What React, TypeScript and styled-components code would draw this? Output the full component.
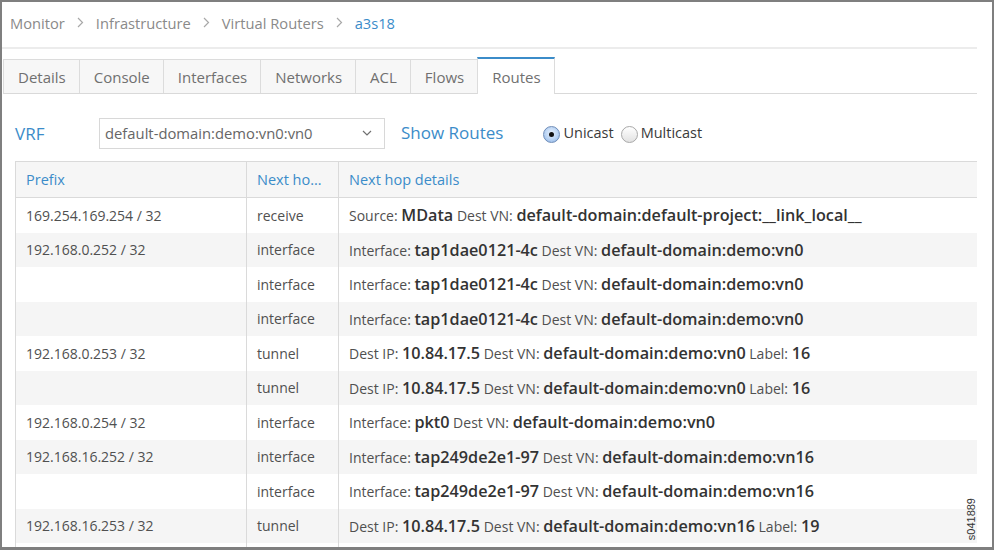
import styled, { createGlobalStyle } from 'styled-components'

const GlobalStyle = createGlobalStyle`
  html, body {
    margin: 0;
    padding: 0;
    background: #ffffff;
  }
  body {
    font-family: "Open Sans", "Noto Sans", sans-serif;
  }
`

const BLUE = '#3b8cc9'

const Frame = styled.div`
  width: 994px;
  height: 550px;
  box-sizing: border-box;
  border: 2px solid #7f7f7f;
  border-bottom-width: 3px;
  background: #fff;
  overflow: hidden;
  position: relative;
  padding-right: 15px;
`

const Crumbs = styled.div`
  height: 47px;
  box-sizing: border-box;
  padding: 0 0 4px 8px;
  display: flex;
  align-items: center;
  gap: 12px;
  border-bottom: 2px solid #ececec;
  font-size: 14.7px;
  color: #8a8a8a;
`

const Crumb = styled.span<{ $active?: boolean }>`
  color: ${p => (p.$active ? BLUE : '#8a8a8a')};
`

const TabBar = styled.div`
  margin-top: 8px;
  margin-left: 1px;
  display: flex;
  align-items: flex-end;
  border-bottom: 1px solid #d9d9d9;
  height: 36px;
`

const Tab = styled.div<{ $active?: boolean }>`
  box-sizing: border-box;
  padding: 0 13px 0 14px;
  display: flex;
  align-items: center;
  font-size: 15px;
  color: #707070;
  border: 1px solid #dcdcdc;
  border-bottom: none;
  border-right: none;
  background: ${p => (p.$active ? '#ffffff' : '#f7f7f7')};
  border-top: ${p => (p.$active ? `2px solid ${BLUE}` : '1px solid #dcdcdc')};
  margin-bottom: ${p => (p.$active ? '-1px' : '0')};
  height: ${p => (p.$active ? '37px' : '34px')};
  &:last-child {
    border-right: 1px solid #dcdcdc;
  }
`

const Content = styled.div`
  padding: 23px 0 0 13px;
`

const Toolbar = styled.div`
  display: flex;
  align-items: center;
  height: 32px;
`

const VrfLabel = styled.span`
  width: 84px;
  font-size: 17px;
  color: ${BLUE};
`

const Select = styled.div`
  width: 286px;
  height: 31px;
  box-sizing: border-box;
  border: 1px solid #d8d8d8;
  display: flex;
  align-items: center;
  justify-content: space-between;
  padding: 0 12px 0 5px;
  font-size: 14.8px;
  color: #666;
`

const ShowRoutes = styled.span`
  margin-left: 16px;
  font-size: 17px;
  color: ${BLUE};
  margin-top: -1px;
`

const RadioGroup = styled.div`
  margin-left: 40px;
  display: flex;
  align-items: center;
  gap: 3px;
  font-size: 14.5px;
  color: #3a3a3a;
  margin-top: -1px;
`

const RadioDot = styled.span<{ $on?: boolean }>`
  width: 17px;
  height: 17px;
  box-sizing: border-box;
  border-radius: 50%;
  border: 1px solid ${p => (p.$on ? '#6f8db8' : '#a8a8a8')};
  background: ${p =>
    p.$on
      ? 'radial-gradient(circle at 50% 40%, #e8f1fd 0%, #b9d3f3 55%, #86aee4 100%)'
      : 'linear-gradient(#ffffff, #e2e2e2)'};
  display: inline-flex;
  align-items: center;
  justify-content: center;
  margin-top: 4px;
  &::after {
    content: '';
    display: ${p => (p.$on ? 'block' : 'none')};
    width: 5px;
    height: 5px;
    border-radius: 50%;
    background: #111;
  }
`

const RadioLabel = styled.span`
  margin-right: 4px;
`

const Table = styled.table`
  margin-top: 12px;
  width: 962px;
  table-layout: fixed;
  border-collapse: collapse;
  border-top: 1px solid #dadada;
  border-left: 1px solid #dadada;
`

const Th = styled.th`
  height: 35px;
  padding: 0 10px;
  text-align: left;
  font-weight: 400;
  font-size: 14.5px;
  color: ${BLUE};
  background: #f6f6f6;
  border-right: 1px solid #dadada;
  border-bottom: 1px solid #dadada;
  white-space: nowrap;
  overflow: hidden;
  &:last-child {
    border-right: none;
  }
`

const Tr = styled.tr<{ $alt: boolean }>`
  background: ${p => (p.$alt ? '#f5f5f5' : '#ffffff')};
`

const Td = styled.td`
  height: 34.5px;
  padding: 0 10px;
  font-size: 14px;
  color: #505050;
  border-right: 1px solid #dadada;
  white-space: nowrap;
  overflow: hidden;
  &:last-child {
    border-right: none;
  }
`

const Val = styled.b`
  font-weight: 600;
  font-size: 16.2px;
  color: #333;
`

const Watermark = styled.div`
  position: absolute;
  right: 16px;
  bottom: 7px;
  font-family: "Liberation Sans", Arial, sans-serif;
  font-size: 11px;
  line-height: 10px;
  color: #333;
  writing-mode: vertical-rl;
  transform: rotate(180deg);
  white-space: nowrap;
`

const Sep = () => (
  <svg width="7" height="11" viewBox="0 0 7 11">
    <path d="M1 1l4.5 4.5L1 10" fill="none" stroke="#a8a8a8" strokeWidth="1.2" />
  </svg>
)

const Chevron = () => (
  <svg width="10" height="6" viewBox="0 0 10 6">
    <path d="M1 1l4 4 4-4" fill="none" stroke="#707070" strokeWidth="1.2" />
  </svg>
)

type Part = [string, string]
interface Route {
  prefix: string
  hop: string
  details: Part[]
}

const iface = (tap: string, vn: string): Part[] => [
  ['Interface: ', tap],
  [' Dest VN: ', vn],
]
const tunnel = (vn: string, label: string): Part[] => [
  ['Dest IP: ', '10.84.17.5'],
  [' Dest VN: ', vn],
  [' Label: ', label],
]

const routes: Route[] = [
  {
    prefix: '169.254.169.254 / 32',
    hop: 'receive',
    details: [
      ['Source: ', 'MData'],
      [' Dest VN: ', 'default-domain:default-project:__link_local__'],
    ],
  },
  { prefix: '192.168.0.252 / 32', hop: 'interface', details: iface('tap1dae0121-4c', 'default-domain:demo:vn0') },
  { prefix: '', hop: 'interface', details: iface('tap1dae0121-4c', 'default-domain:demo:vn0') },
  { prefix: '', hop: 'interface', details: iface('tap1dae0121-4c', 'default-domain:demo:vn0') },
  { prefix: '192.168.0.253 / 32', hop: 'tunnel', details: tunnel('default-domain:demo:vn0', '16') },
  { prefix: '', hop: 'tunnel', details: tunnel('default-domain:demo:vn0', '16') },
  { prefix: '192.168.0.254 / 32', hop: 'interface', details: iface('pkt0', 'default-domain:demo:vn0') },
  { prefix: '192.168.16.252 / 32', hop: 'interface', details: iface('tap249de2e1-97', 'default-domain:demo:vn16') },
  { prefix: '', hop: 'interface', details: iface('tap249de2e1-97', 'default-domain:demo:vn16') },
  { prefix: '192.168.16.253 / 32', hop: 'tunnel', details: tunnel('default-domain:demo:vn16', '19') },
  { prefix: '', hop: '', details: [] },
]

const tabs = ['Details', 'Console', 'Interfaces', 'Networks', 'ACL', 'Flows', 'Routes']

export default function App() {
  return (
    <>
      <GlobalStyle />
      <Frame>
        <Crumbs>
          <Crumb>Monitor</Crumb>
          <Sep />
          <Crumb>Infrastructure</Crumb>
          <Sep />
          <Crumb>Virtual Routers</Crumb>
          <Sep />
          <Crumb $active>a3s18</Crumb>
        </Crumbs>

        <TabBar>
          {tabs.map(t => (
            <Tab key={t} $active={t === 'Routes'}>
              {t}
            </Tab>
          ))}
        </TabBar>

        <Content>
          <Toolbar>
            <VrfLabel>VRF</VrfLabel>
            <Select>
              <span>default-domain:demo:vn0:vn0</span>
              <Chevron />
            </Select>
            <ShowRoutes>Show Routes</ShowRoutes>
            <RadioGroup>
              <RadioDot $on />
              <RadioLabel>Unicast</RadioLabel>
              <RadioDot />
              <RadioLabel>Multicast</RadioLabel>
            </RadioGroup>
          </Toolbar>

          <Table>
            <colgroup>
              <col style={{ width: 231 }} />
              <col style={{ width: 92 }} />
              <col />
            </colgroup>
            <thead>
              <tr>
                <Th>Prefix</Th>
                <Th>Next ho…</Th>
                <Th>Next hop details</Th>
              </tr>
            </thead>
            <tbody>
              {routes.map((r, i) => (
                <Tr key={i} $alt={i % 2 === 1}>
                  <Td>{r.prefix}</Td>
                  <Td>{r.hop}</Td>
                  <Td>
                    {r.details.map(([label, value], j) => (
                      <span key={j}>
                        {label}
                        <Val>{value}</Val>
                      </span>
                    ))}
                  </Td>
                </Tr>
              ))}
            </tbody>
          </Table>
        </Content>
        <Watermark>s041889</Watermark>
      </Frame>
    </>
  )
}
